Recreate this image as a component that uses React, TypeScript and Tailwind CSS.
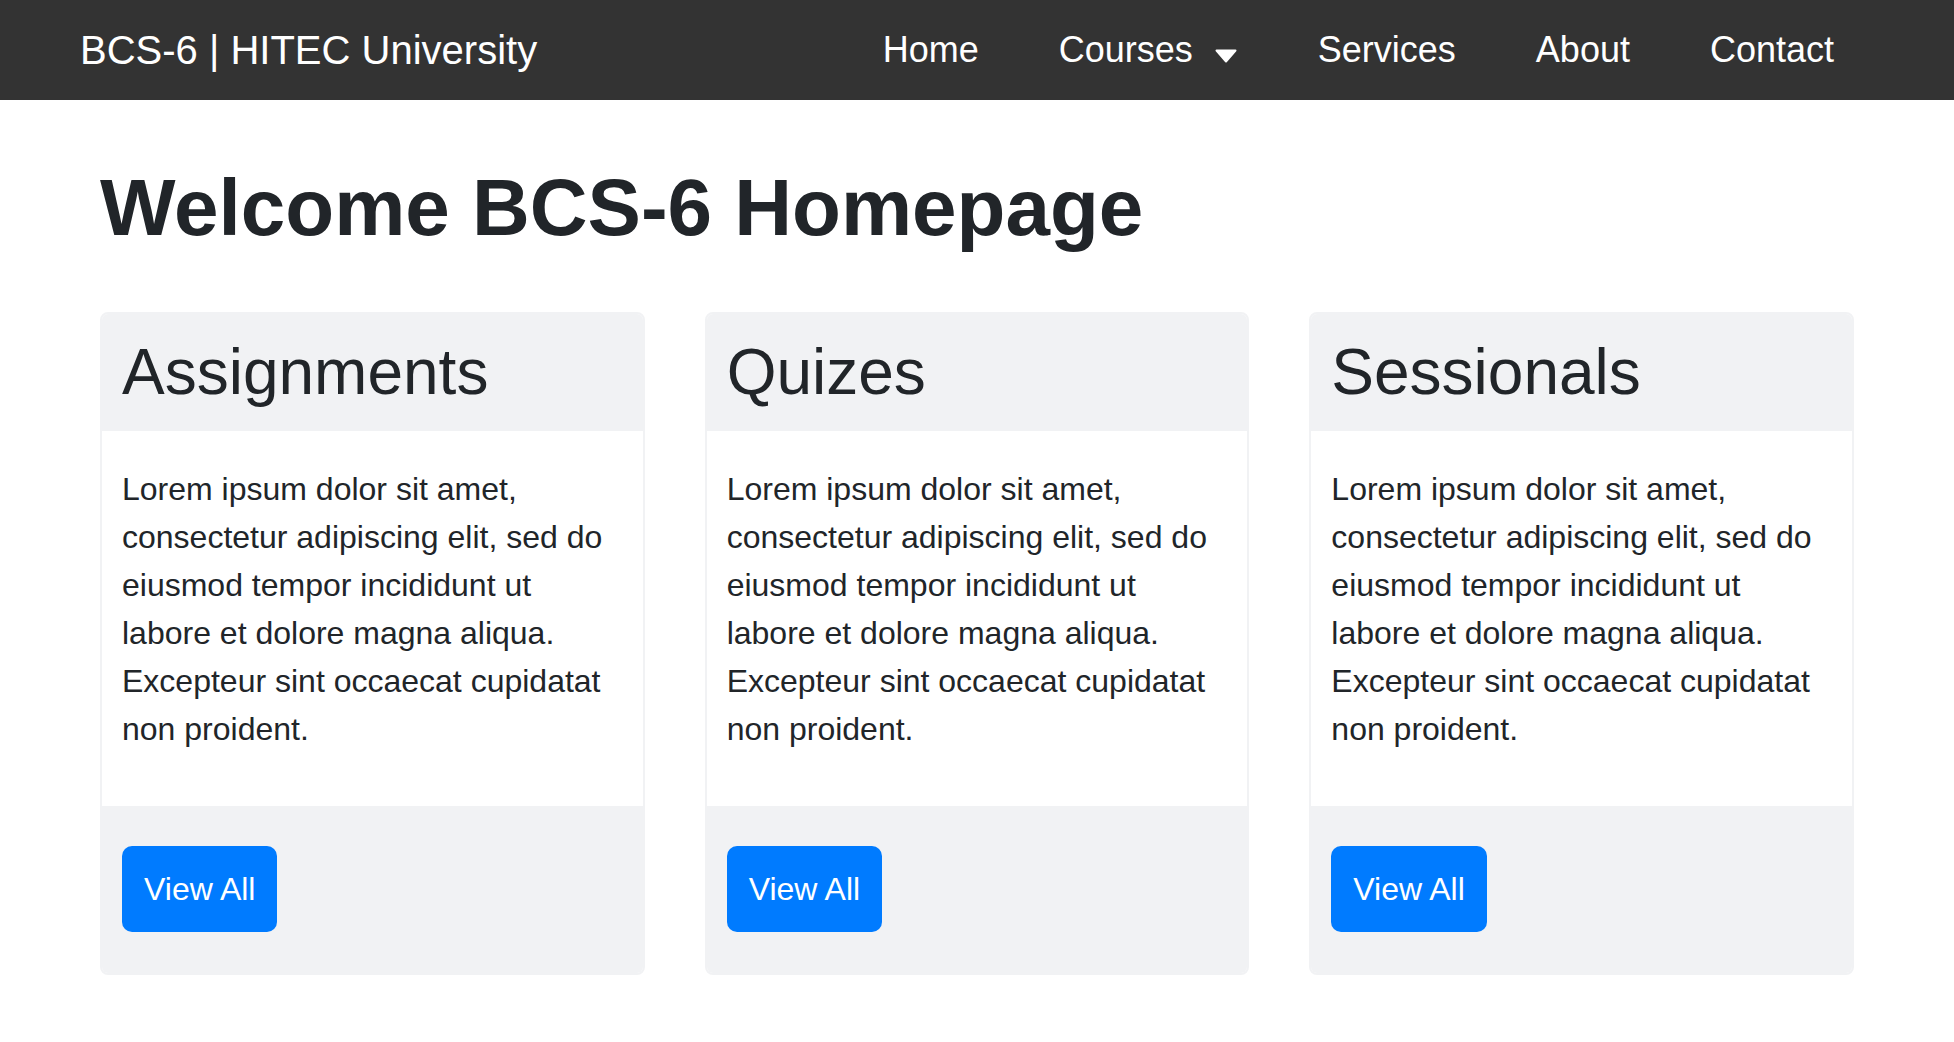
import React from "react";

const navLinks = ["Home", "Courses", "Services", "About", "Contact"];

const cards = ["Assignments", "Quizes", "Sessionals"];

const lorem =
  "Lorem ipsum dolor sit amet, consectetur adipiscing elit, sed do eiusmod tempor incididunt ut labore et dolore magna aliqua. Excepteur sint occaecat cupidatat non proident.";

function Caret() {
  return (
    <svg width="24" height="14" viewBox="0 0 24 14" className="ml-[21px] mt-[12px]">
      <path
        d="M2.5 1.5 H21.5 L12 12.5 Z"
        fill="#fff"
        stroke="#fff"
        strokeWidth="2"
        strokeLinejoin="round"
      />
    </svg>
  );
}

export default function App() {
  return (
    <div className="min-h-screen bg-white font-['Liberation_Sans',Arial,sans-serif] text-[#212529]">
      {/* Navbar */}
      <nav className="h-[100px] bg-[#333333] flex items-center justify-between px-[80px]">
        <a href="#" className="text-white text-[40px] leading-[46px]">
          BCS-6 | HITEC University
        </a>
        <ul className="flex items-center">
          {navLinks.map((link) => (
            <li key={link} className="px-[40px] flex items-center">
              <a href="#" className="text-white text-[36px] leading-[42px]">
                {link}
              </a>
              {link === "Courses" && <Caret />}
            </li>
          ))}
        </ul>
      </nav>

      {/* Main */}
      <main className="px-[100px] pt-[60px] pb-[60px]">
        <h1 className="text-[80px] leading-[1.2] font-bold mb-[56px]">
          Welcome BCS-6 Homepage
        </h1>

        <div className="grid grid-cols-3 gap-[60px]">
          {cards.map((title) => (
            <div
              key={title}
              className="rounded-[8px] border-2 border-[#f1f2f4] overflow-hidden flex flex-col"
            >
              {/* Header */}
              <div className="bg-[#f1f2f4] px-[20px] py-[20px]">
                <h2 className="text-[64px] leading-[1.2]">{title}</h2>
              </div>

              {/* Body */}
              <div className="bg-white px-[20px] pt-[34px] pb-[53px]">
                <p className="text-[32px] leading-[48px]">{lorem}</p>
              </div>

              {/* Footer */}
              <div className="bg-[#f1f2f4] px-[20px] pt-[40px] pb-[41px]">
                <a
                  href="#"
                  className="inline-block bg-[#007bff] text-white text-[32px] leading-[48px] px-[22px] py-[19px] rounded-[10px]"
                >
                  View All
                </a>
              </div>
            </div>
          ))}
        </div>
      </main>
    </div>
  );
}
